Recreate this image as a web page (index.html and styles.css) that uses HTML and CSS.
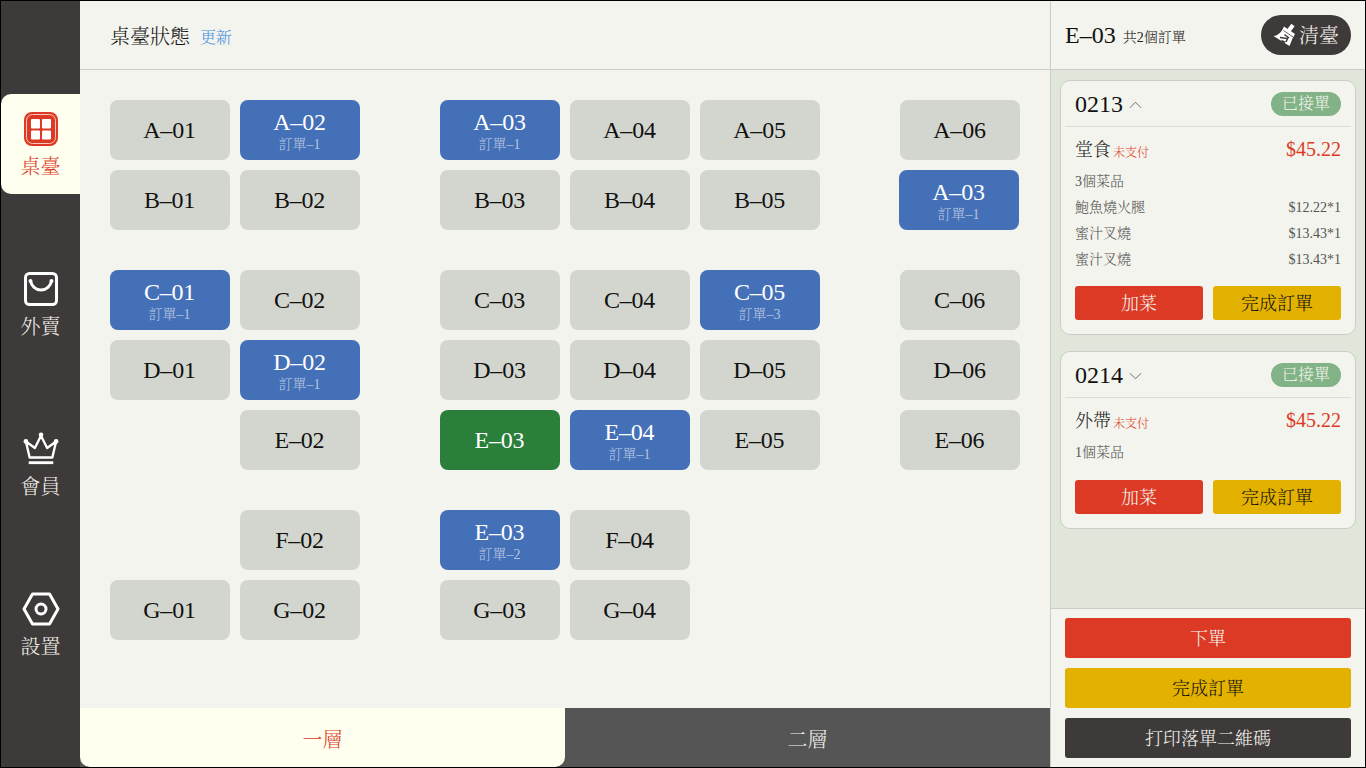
FILE: index.html
```html
<!DOCTYPE html>
<html lang="zh-Hant">
<head>
<meta charset="utf-8">
<title>桌臺狀態</title>
<link rel="stylesheet" href="styles.css">
</head>
<body>
<div class="app">
  <nav class="side">
    <a class="nav-item active">
      <svg class="nav-icon" viewBox="0 0 34 34"><rect x="0" y="0" width="34" height="34" rx="8" fill="#dc3a24"/><rect x="2.500" y="2.500" width="29" height="29" rx="6" fill="none" stroke="#f6c9c0" stroke-width="1"/><rect x="7" y="7" width="9" height="9.500" rx="1" fill="#fff"/><rect x="18" y="7" width="9" height="9.500" rx="1" fill="#fff"/><rect x="7" y="18.500" width="9" height="9" rx="1" fill="#fff"/><rect x="18" y="18.500" width="9" height="9" rx="1" fill="#fff"/></svg>
      <span>桌臺</span>
    </a>
    <a class="nav-item">
      <svg class="nav-icon" viewBox="0 0 34 34"><rect x="1.500" y="1.500" width="31" height="31" rx="4" fill="none" stroke="#fff" stroke-width="3"/><path d="M6.500 9c1 5 5 9 10.500 9s9.500-4 10.500-9" fill="none" stroke="#fff" stroke-width="3"/><circle cx="6.500" cy="9" r="2" fill="#fff"/><circle cx="27.500" cy="9" r="2" fill="#fff"/></svg>
      <span>外賣</span>
    </a>
    <a class="nav-item">
      <svg class="nav-icon wide" viewBox="0 0 38 36"><path d="M3 10l4 17h24l4-17-9.500 7L19 4l-6.500 13z" fill="none" stroke="#fff" stroke-width="2.500" stroke-linejoin="round"/><circle cx="3" cy="10" r="2.500" fill="#fff"/><circle cx="19" cy="3" r="2.500" fill="#fff"/><circle cx="35" cy="10" r="2.500" fill="#fff"/><rect x="6" y="31" width="26" height="3" fill="#fff"/></svg>
      <span>會員</span>
    </a>
    <a class="nav-item">
      <svg class="nav-icon wide" viewBox="0 0 38 34"><path d="M10.500 2h17L36 17l-8.500 15h-17L2 17z" fill="none" stroke="#fff" stroke-width="3" stroke-linejoin="round"/><circle cx="19" cy="17" r="5" fill="none" stroke="#fff" stroke-width="3"/></svg>
      <span>設置</span>
    </a>
  </nav>

  <main class="main">
    <header class="main-head">
      <h1>桌臺狀態</h1>
      <a class="refresh">更新</a>
    </header>
    <div class="floor">
      <div class="block">
        <div class="tile">A–01</div>
        <div class="tile busy">A–02<small>訂單–1</small></div>
        <i></i>
        <div class="tile busy">A–03<small>訂單–1</small></div>
        <div class="tile">A–04</div>
        <div class="tile">A–05</div>
        <i></i>
        <div class="tile">A–06</div>
        <div class="tile">B–01</div>
        <div class="tile">B–02</div>
        <i></i>
        <div class="tile">B–03</div>
        <div class="tile">B–04</div>
        <div class="tile">B–05</div>
        <i></i>
        <div class="tile busy nudge">A–03<small>訂單–1</small></div>
      </div>
      <div class="block">
        <div class="tile busy">C–01<small>訂單–1</small></div>
        <div class="tile">C–02</div>
        <i></i>
        <div class="tile">C–03</div>
        <div class="tile">C–04</div>
        <div class="tile busy">C–05<small>訂單–3</small></div>
        <i></i>
        <div class="tile">C–06</div>
        <div class="tile">D–01</div>
        <div class="tile busy">D–02<small>訂單–1</small></div>
        <i></i>
        <div class="tile">D–03</div>
        <div class="tile">D–04</div>
        <div class="tile">D–05</div>
        <i></i>
        <div class="tile">D–06</div>
        <i></i>
        <div class="tile">E–02</div>
        <i></i>
        <div class="tile current">E–03</div>
        <div class="tile busy">E–04<small>訂單–1</small></div>
        <div class="tile">E–05</div>
        <i></i>
        <div class="tile">E–06</div>
      </div>
      <div class="block">
        <i></i>
        <div class="tile">F–02</div>
        <i></i>
        <div class="tile busy">E–03<small>訂單–2</small></div>
        <div class="tile">F–04</div>
        <i></i><i></i><i></i>
        <div class="tile">G–01</div>
        <div class="tile">G–02</div>
        <i></i>
        <div class="tile">G–03</div>
        <div class="tile">G–04</div>
      </div>
    </div>
    <div class="tabs">
      <div class="tab on">一層</div>
      <div class="tab">二層</div>
    </div>
  </main>

  <aside class="panel">
    <header class="panel-head">
      <div class="panel-title"><b>E–03</b><span>共2個訂單</span></div>
      <button class="clear">
        <svg viewBox="0 0 24 24" class="broom"><path d="M15.500 8l4.500-6" fill="none" stroke="#fff" stroke-width="4"/><path d="M11 3.500l11 7.500-2.500 4.500L16.500 23 .5 13C5 12.500 8.500 9.500 11 3.500z" fill="#fff"/><path d="M10.500 7.500l9.500 6.500" fill="none" stroke="#3f3a3a" stroke-width=".8"/><path d="M7 14.500l7.500 1-1.500 3.500M11.500 11.500l4.500 3.500M8.500 17.500l3.500 2" fill="none" stroke="#3f3a3a" stroke-width="1.500"/></svg>
        <span>清臺</span>
      </button>
    </header>
    <div class="orders">
      <section class="card">
        <div class="card-head">
          <div class="card-no">0213<svg class="chev" viewBox="0 0 14 8"><path d="M1 7l6-6 6 6" fill="none" stroke="#666" stroke-width="1"/></svg></div>
          <span class="status">已接單</span>
        </div>
        <div class="card-body">
          <div class="line-main"><div><span class="kind">堂食</span><span class="unpaid">未支付</span></div><span class="total">$45.22</span></div>
          <div class="line">3個菜品</div>
          <div class="line"><span>鮑魚燒火腿</span><span>$12.22*1</span></div>
          <div class="line"><span>蜜汁叉燒</span><span>$13.43*1</span></div>
          <div class="line"><span>蜜汁叉燒</span><span>$13.43*1</span></div>
          <div class="card-btns"><button class="btn red">加菜</button><button class="btn yellow">完成訂單</button></div>
        </div>
      </section>
      <section class="card short">
        <div class="card-head">
          <div class="card-no">0214<svg class="chev" viewBox="0 0 14 8"><path d="M1 1l6 6 6-6" fill="none" stroke="#666" stroke-width="1"/></svg></div>
          <span class="status">已接單</span>
        </div>
        <div class="card-body">
          <div class="line-main"><div><span class="kind">外帶</span><span class="unpaid">未支付</span></div><span class="total">$45.22</span></div>
          <div class="line">1個菜品</div>
          <div class="card-btns"><button class="btn red">加菜</button><button class="btn yellow">完成訂單</button></div>
        </div>
      </section>
    </div>
    <footer class="panel-foot">
      <button class="btn big red">下單</button>
      <button class="btn big yellow">完成訂單</button>
      <button class="btn big dark">打印落單二維碼</button>
    </footer>
  </aside>
</div>
</body>
</html>
```
FILE: styles.css
```css
* { box-sizing: border-box; }
html, body { margin: 0; height: 100%; }
body { font-family: "Liberation Serif", "Noto Serif CJK TC", "Noto Serif CJK SC", "AR PL UMing TW", serif; font-weight: 300; color: #111; background: #000; }
button { font-family: inherit; font-weight: inherit; border: 0; cursor: pointer; }

.app { width: 1366px; height: 768px; display: flex; border: 1px solid #000; overflow: hidden; background: #f3f4ed; }

.side { width: 79px; flex: none; background: #3f3a3a; padding-top: 93px; display: flex; flex-direction: column; gap: 60px; }
.nav-item { height: 100px; display: flex; flex-direction: column; align-items: center; padding-top: 18px; color: #f3f4ed; font-size: 20px; line-height: 28px; border-radius: 10px 0 0 10px; }
.nav-item.active { background: #feffef; color: #dc3a24; }
.nav-icon { width: 34px; height: 34px; display: block; margin-bottom: 7px; }
.nav-icon.wide { width: 38px; }

.main { width: 970px; flex: none; display: flex; flex-direction: column; }
.main-head { height: 69px; flex: none; border-bottom: 1px solid #cbccc7; display: flex; align-items: center; padding: 1px 0 0 30px; gap: 10px; }
.main-head h1 { margin: 0; font-size: 20px; font-weight: inherit; color: #111; }
.refresh { font-size: 16px; color: #4a90e2; padding-top: 2px; }

.floor { flex: 1; padding: 30px 30px 0; display: flex; flex-direction: column; gap: 40px; }
.block { display: grid; grid-template-columns: 120px 120px 60px 120px 120px 120px 60px 120px; grid-auto-rows: 60px; gap: 10px; }
.tile { background: #d3d6ce; border-radius: 8px; display: flex; flex-direction: column; align-items: center; justify-content: center; padding-right: 1px; font-size: 24px; line-height: 26px; letter-spacing: -.2px; color: #111; }
.tile small { font-size: 14px; line-height: 16px; margin-top: 2px; letter-spacing: 0; color: rgba(255,255,255,.6); }
.tile.busy { background: #4470b8; color: #fff; justify-content: flex-start; padding-top: 9px; }
.tile.current { background: #2a7f3a; color: #fff; }
.tile.nudge { margin: 0 1px 0 -1px; }

.tabs { height: 59px; flex: none; display: flex; background: #555; }
.tab { flex: 1; display: flex; align-items: center; justify-content: center; padding-top: 1px; font-size: 20px; color: #f3f4ed; }
.tab.on { background: #feffef; color: #dc3a24; border-radius: 0 0 10px 10px; }

.panel { flex: 1; border-left: 1px solid #cbccc7; display: flex; flex-direction: column; min-width: 0; background: #e0e6d9; }
.panel-head { height: 69px; flex: none; background: #f3f4ed; border-bottom: 1px solid #cbccc7; display: flex; align-items: center; justify-content: space-between; padding: 0 14px; }
.panel-title { display: flex; align-items: center; gap: 7px; }
.panel-title b { font-weight: inherit; font-size: 24px; }
.panel-title span { font-size: 14px; color: #222; padding-top: 1px; }
.clear { width: 90px; height: 40px; border-radius: 20px; background: #3f3a3a; color: #f3f4ed; font-size: 20px; display: flex; align-items: center; justify-content: center; gap: 2px; padding: 0 0 2px; }
.broom { width: 24px; height: 24px; margin-top: 2px; }

.orders { flex: 1; padding: 10px 9px 0; display: flex; flex-direction: column; gap: 16px; }
.card { background: #f3f4ed; border: 1px solid #cbccc7; border-radius: 10px; padding: 0 4px; }
.card-head { height: 46px; border-bottom: 1px solid #dcddd8; display: flex; align-items: center; justify-content: space-between; padding: 0 10px; }
.card-no { font-size: 24px; display: flex; align-items: center; gap: 6px; padding-top: 2px; }
.chev { width: 13px; height: 8px; }
.status { width: 70px; height: 24px; border-radius: 12px; background: #82b386; color: #f3f4ed; font-size: 16px; line-height: 24px; text-align: center; }
.card-body { padding: 7px 10px 14px; }
.line-main { display: flex; justify-content: space-between; align-items: center; height: 28px; margin-bottom: 7px; }
.kind { font-size: 18px; color: #222; }
.unpaid { font-size: 12px; color: #dc3a24; margin-left: 2px; vertical-align: -1px; }
.total { font-size: 20px; color: #dc3a24; padding-top: 2px; }
.line { display: flex; justify-content: space-between; height: 26px; align-items: baseline; line-height: 26px; font-size: 14px; color: #555; }
.card-btns { display: flex; gap: 10px; margin-top: 13px; }
.short .card-btns { margin-top: 14px; }
.btn { flex: 1; height: 34px; border-radius: 3px; font-size: 18px; padding: 0 0 2px; }
.btn.red { background: #dc3a24; color: #f3f4ed; }
.btn.yellow { background: #e3b200; color: #111; }
.btn.dark { background: #3f3a3a; color: #f3f4ed; }
.btn.big { flex: none; height: 40px; width: 100%; }

.panel-foot { height: 159px; flex: none; background: #f3f4ed; border-top: 1px solid #cbccc7; padding: 9px 14px 0; display: flex; flex-direction: column; gap: 10px; }
```
